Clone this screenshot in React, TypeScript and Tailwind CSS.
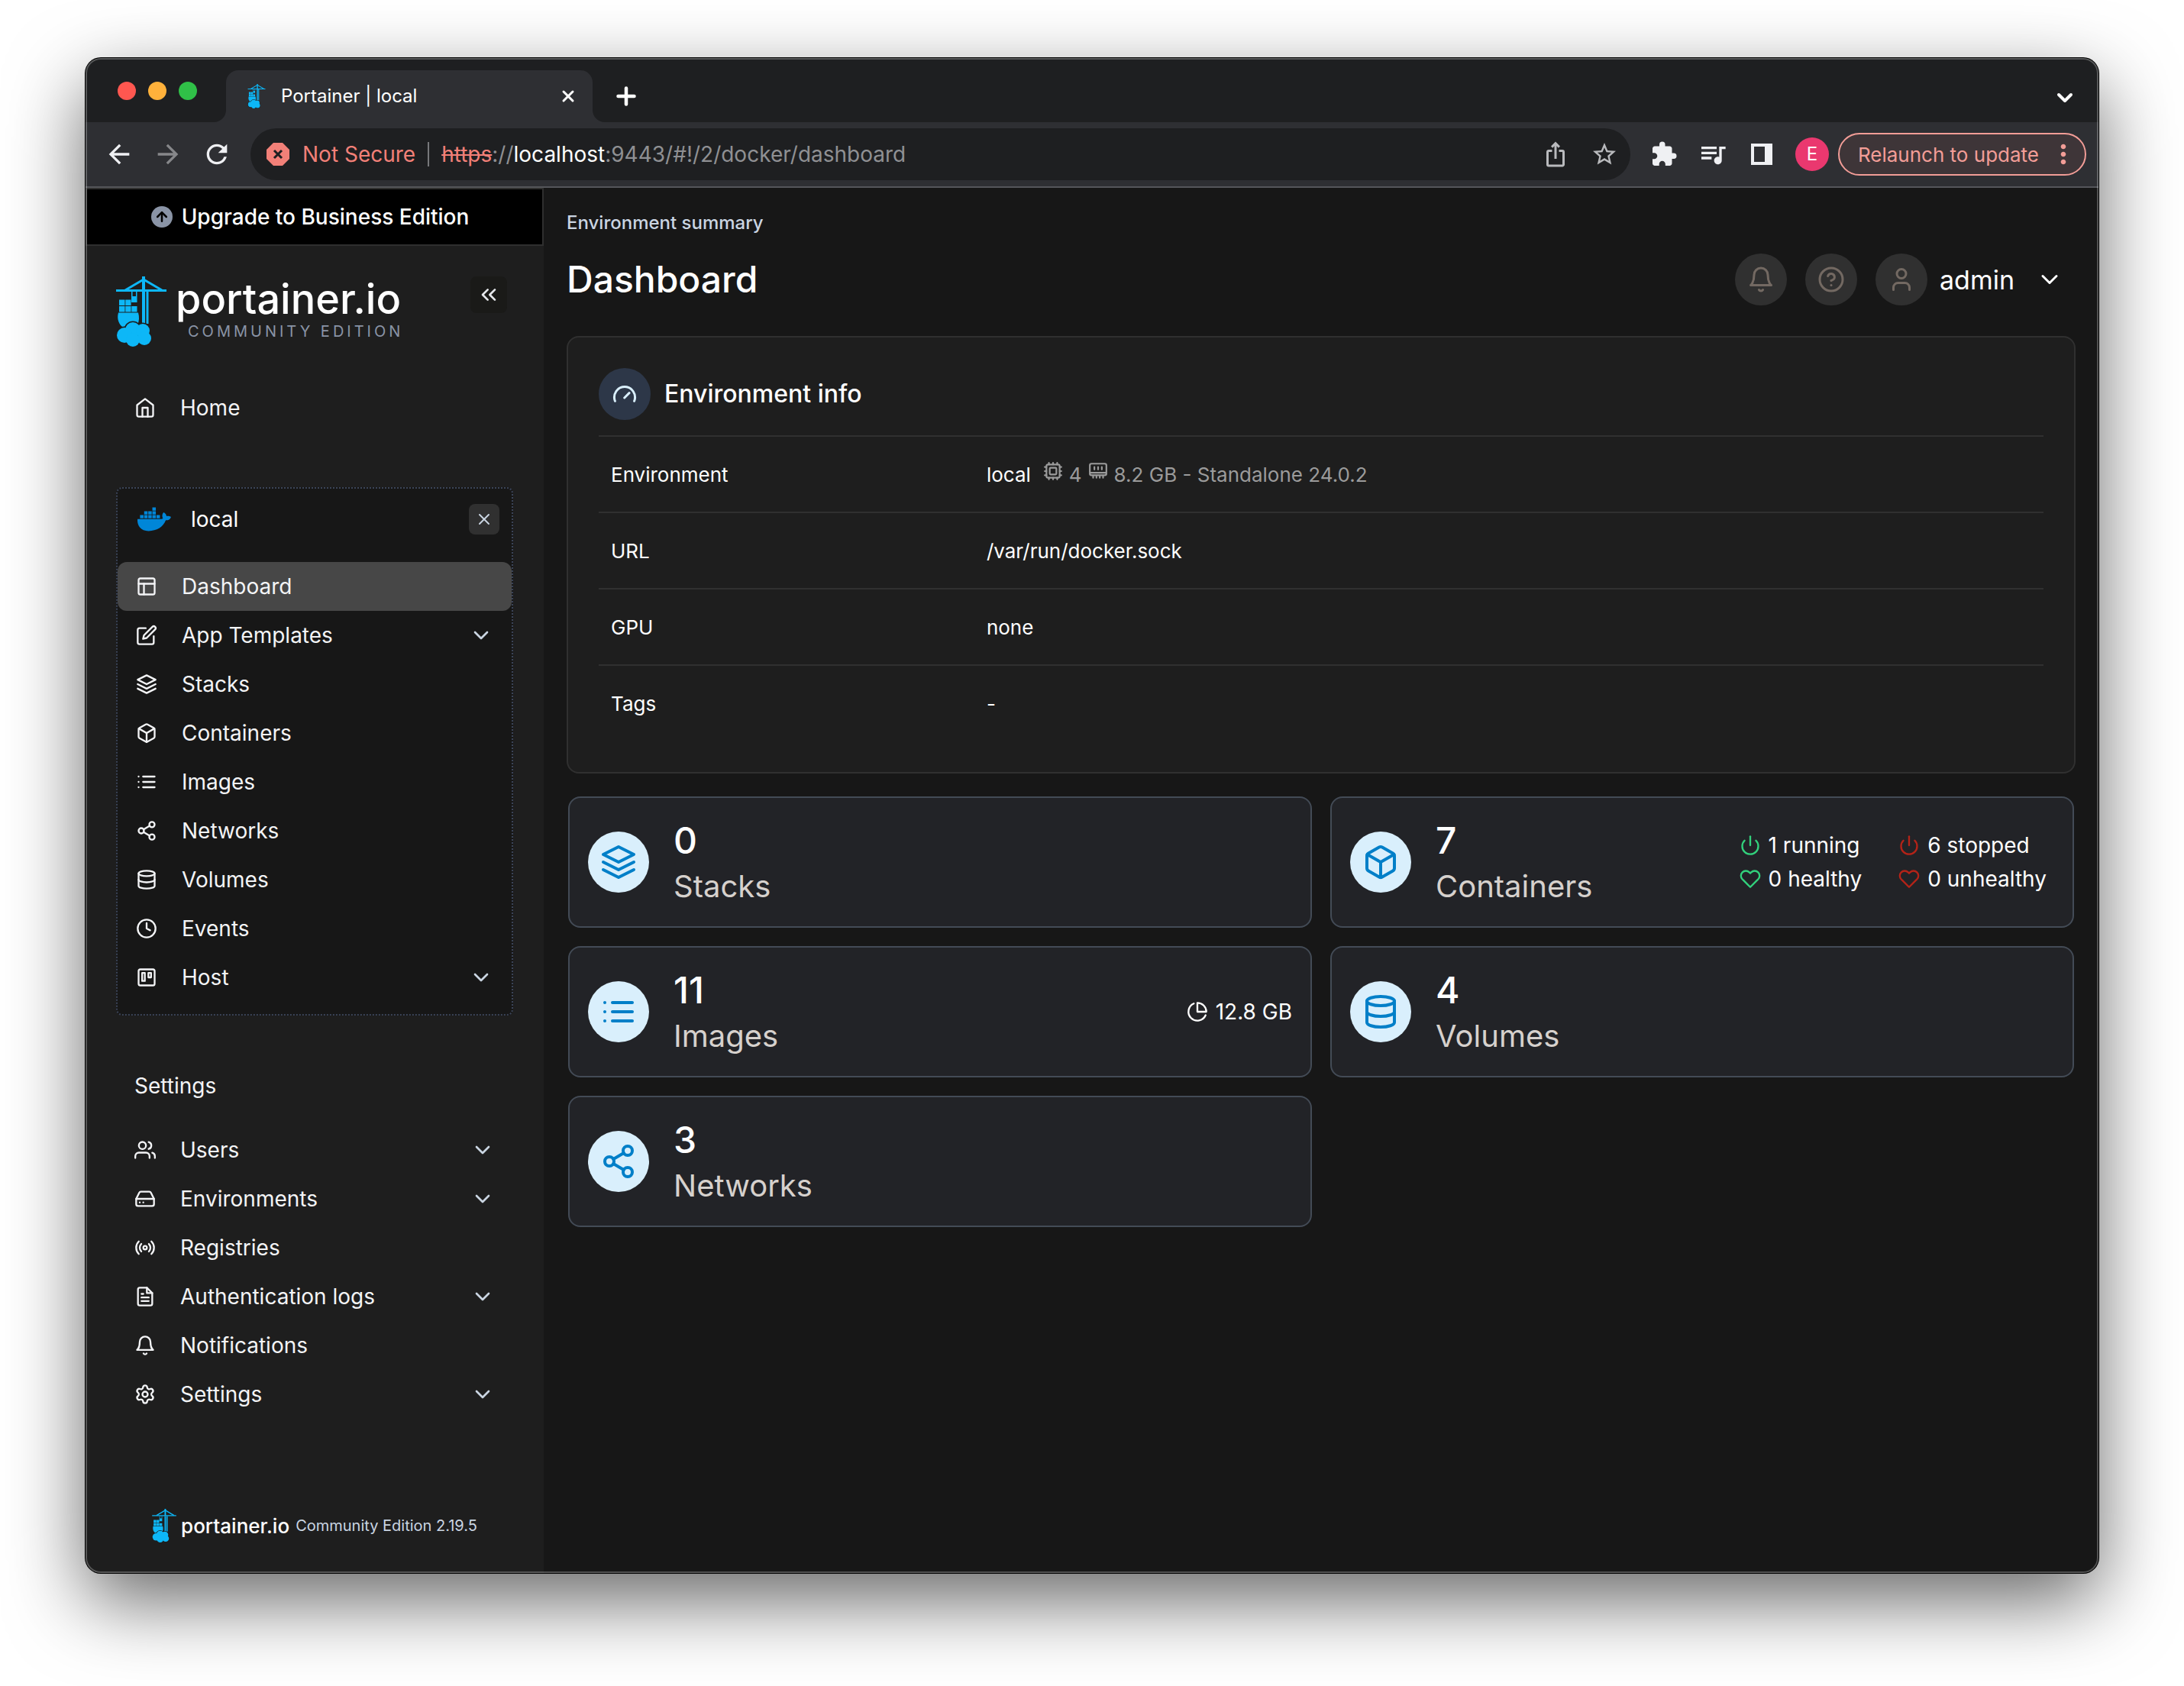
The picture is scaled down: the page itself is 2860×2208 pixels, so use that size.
import type { ReactNode } from "react";
import type { IconType } from "react-icons";
import {
  FiArrowUp,
  FiBell,
  FiBox,
  FiChevronDown,
  FiChevronsLeft,
  FiClock,
  FiDatabase,
  FiEdit,
  FiFileText,
  FiHardDrive,
  FiHeart,
  FiHelpCircle,
  FiHome,
  FiLayers,
  FiLayout,
  FiList,
  FiPieChart,
  FiPlus,
  FiPower,
  FiRadio,
  FiShare2,
  FiTrello,
  FiUsers,
  FiX,
} from "react-icons/fi";
import {
  MdArrowBack,
  MdArrowForward,
  MdExtension,
  MdMoreVert,
  MdOutlineIosShare,
  MdQueueMusic,
  MdRefresh,
  MdStarBorder,
} from "react-icons/md";
import { FaDocker } from "react-icons/fa";
import { Cpu, Settings, User } from "lucide-react";

type NavItem = {
  label: string;
  icon: ReactNode;
  expandable?: boolean;
  active?: boolean;
};

const envItems: NavItem[] = [
  { label: "Dashboard", icon: <FiLayout />, active: true },
  { label: "App Templates", icon: <FiEdit />, expandable: true },
  { label: "Stacks", icon: <FiLayers /> },
  { label: "Containers", icon: <FiBox /> },
  { label: "Images", icon: <FiList /> },
  { label: "Networks", icon: <FiShare2 /> },
  { label: "Volumes", icon: <FiDatabase /> },
  { label: "Events", icon: <FiClock /> },
  { label: "Host", icon: <FiTrello />, expandable: true },
];

const settingsItems: NavItem[] = [
  { label: "Users", icon: <FiUsers />, expandable: true },
  { label: "Environments", icon: <FiHardDrive />, expandable: true },
  { label: "Registries", icon: <FiRadio /> },
  { label: "Authentication logs", icon: <FiFileText />, expandable: true },
  { label: "Notifications", icon: <FiBell /> },
  { label: "Settings", icon: <Settings />, expandable: true },
];

const cloud = (
  <>
    <circle cx="22" cy="70" r="10" />
    <circle cx="35" cy="71" r="9" />
    <circle cx="11" cy="77" r="10" />
    <circle cx="37" cy="81" r="9" />
    <circle cx="22" cy="83" r="9" />
  </>
);

const CraneLogo = ({ className }: { className: string }) => (
  <svg viewBox="0 0 66 92" className={className} fill="#0db7f7">
    <path d="M34 0h4v18h-4zM0 17h66v3H0z" />
    <path d="M12 18 36 4l24 14" fill="none" stroke="#0db7f7" strokeWidth="3" />
    <path d="M34 20h4v42h-4zM39.500 20h3v42h-3z" />
    <path d="M20 20h1.500v6H26v-6h1.500v14H20z" />
    <path d="M4 30.500h7.500V38H4zM12.300 30.500h7.200V38h-7.200zM4 39h7.500v7.500H4zM12.300 39h7.200v7.500h-7.200zM20.300 39h7.200v7.500h-7.200z" />
    <path d="M3 47.500h26c1.500 5 1.500 11-1 16L10 67c-6-3-9.500-11-7-19.500z" />
    <g stroke="#1e1e1e" strokeWidth="3">
      {cloud}
    </g>
    {cloud}
  </svg>
);

const NavLink = ({ label, icon, expandable, active }: NavItem) => (
  <a
    href="#"
    className={
      active
        ? "flex h-16 items-center gap-8 rounded-xl bg-[#474747] px-6 text-[28px] text-gray-100"
        : "flex h-16 items-center gap-8 rounded-xl px-6 text-[28px] text-gray-100"
    }
  >
    <span className="[&>svg]:size-7">{icon}</span>
    <span className="flex-1">{label}</span>
    {expandable && <FiChevronDown className="size-8 text-slate-300" />}
  </a>
);

const TabStrip = () => (
  <div className="flex h-[84px] items-end bg-[#1e1f21] pr-7">
    <div className="flex h-[84px] w-[184px] items-center gap-4 pt-[2px] pl-[42px]">
      <button aria-label="Close window" className="size-6 rounded-full bg-[#ff5750]" />
      <button aria-label="Minimize window" className="size-6 rounded-full bg-[#ffb13b]" />
      <button aria-label="Zoom window" className="size-6 rounded-full bg-[#30c048]" />
    </div>
    <div className="relative flex h-[68px] w-[480px] items-center rounded-t-2xl bg-[#2e2f33] pr-5 pl-6">
      <svg viewBox="0 0 16 16" className="absolute bottom-0 -left-4 size-4" fill="#2e2f33">
        <path d="M16 0v16H0A16 16 0 0 0 16 0z" />
      </svg>
      <svg viewBox="0 0 16 16" className="absolute -right-4 bottom-0 size-4" fill="#2e2f33">
        <path d="M0 0v16h16A16 16 0 0 1 0 0z" />
      </svg>
      <CraneLogo className="h-8 w-8" />
      <span className="ml-4 flex-1 text-2xl text-white">Portainer | local</span>
      <button aria-label="Close tab" className="text-white">
        <FiX className="size-6" strokeWidth={3} />
      </button>
    </div>
    <button aria-label="New tab" className="mb-4 ml-6.5 text-white">
      <FiPlus className="size-9" strokeWidth={3} />
    </button>
    <button aria-label="Search tabs" className="mb-4 ml-auto text-white">
      <FiChevronDown className="size-8" strokeWidth={3} />
    </button>
  </div>
);

const Toolbar = () => (
  <div className="flex h-[86px] items-center border-b-2 border-[#55565a] bg-[#2e2f33] pr-4 pl-6 text-[#eff0f3]">
    <button aria-label="Back" className="mr-6">
      <MdArrowBack className="size-10" />
    </button>
    <button aria-label="Forward" className="mr-6 text-[#86878a]">
      <MdArrowForward className="size-10" />
    </button>
    <button aria-label="Reload" className="mr-6">
      <MdRefresh className="size-10" />
    </button>
    <div className="flex h-[68px] flex-1 items-center rounded-full bg-[#1e1f21] pr-4 pl-5 text-[28px]">
      <svg viewBox="0 0 32 32" className="size-8">
        <path d="M10 1h12l9 9v12l-9 9H10l-9-9V10z" fill="#f28078" />
        <path d="m11 11 10 10M21 11 11 21" stroke="#1e1f21" strokeWidth="3" />
      </svg>
      <span className="ml-4 text-[#f28078]">Not Secure</span>
      <span className="mx-4 h-8 w-[2px] bg-[#77787b]" />
      <span className="flex-1 text-[#8f9093]">
        <span className="text-[#f28078] line-through">https</span>://
        <span className="text-white">localhost</span>:9443/#!/2/docker/dashboard
      </span>
      <button aria-label="Share" className="mr-7 text-[#b9babd]">
        <MdOutlineIosShare className="size-9" />
      </button>
      <button aria-label="Bookmark" className="text-[#b9babd]">
        <MdStarBorder className="size-9" />
      </button>
    </div>
    <div className="ml-6 flex items-center gap-6">
      <button aria-label="Extensions">
        <MdExtension className="size-10 p-[2px]" />
      </button>
      <button aria-label="Media">
        <MdQueueMusic className="size-10" />
      </button>
      <button aria-label="Side panel">
        <svg viewBox="0 0 40 40" className="size-10">
          <path d="M6 6h28v28H6zM10 10v20h14V10z" fill="currentColor" fillRule="evenodd" />
        </svg>
      </button>
    </div>
    <button className="ml-6 size-11 rounded-full bg-[#ea386f] text-2xl text-white">E</button>
    <button className="ml-3 flex h-14 items-center rounded-full border-2 border-[#f29d97] bg-[#3e3538] pr-2 pl-6 text-[26px] text-[#f29d97]">
      Relaunch to update
      <MdMoreVert className="ml-3 size-10" />
    </button>
  </div>
);

const Sidebar = () => (
  <aside className="flex w-[600px] shrink-0 flex-col bg-[#1e1e1e]">
    <button className="flex h-[76px] items-center justify-center gap-3 border-2 border-[#2f2f2f] bg-black pr-3 text-[28px] font-medium text-white">
      <span className="flex size-7 items-center justify-center rounded-full bg-[#8a94a6] text-black">
        <FiArrowUp className="size-5" strokeWidth={3} />
      </span>
      Upgrade to Business Edition
    </button>

    <div className="flex items-start pt-10 pr-12 pl-10">
      <CraneLogo className="h-[92px] w-[66px]" />
      <div className="flex flex-1 flex-col pl-3">
        <span className="text-[54px] leading-[60px] font-medium text-white">portainer.io</span>
        <span className="pl-4 text-xl leading-6 tracking-[4px] text-[#8a94a6]">COMMUNITY EDITION</span>
      </div>
      <button aria-label="Collapse sidebar" className="flex size-12 items-center justify-center rounded-lg bg-[#1a1a18] text-gray-200">
        <FiChevronsLeft className="size-8" />
      </button>
    </div>

    <nav className="px-10 pt-12">
      <NavLink label="Home" icon={<FiHome />} />

      <div className="mt-[72px] rounded-lg border-2 border-dotted border-[#3b4458] bg-[#171717] pb-4">
        <div className="flex h-24 items-center pr-4 pb-4 pl-6.5">
          <FaDocker className="size-11 text-[#0086d8]" />
          <span className="ml-6.5 flex-1 text-[28px] text-white">local</span>
          <button aria-label="Close environment" className="flex size-10 items-center justify-center rounded-lg bg-[#303030] text-slate-300">
            <FiX className="size-6" />
          </button>
        </div>
        {envItems.map((item) => (
          <NavLink key={item.label} {...item} />
        ))}
      </div>

      <h2 className="mt-[72px] px-6 text-[28px] leading-10 text-gray-100">Settings</h2>
      <div className="mt-8">
        {settingsItems.map((item) => (
          <NavLink key={item.label} {...item} />
        ))}
      </div>
    </nav>

    <footer className="mt-auto flex items-center justify-center pb-10">
      <CraneLogo className="h-11 w-8" />
      <span className="ml-1.5 text-[26px] font-medium text-white">portainer.io</span>
      <span className="ml-2 text-xl text-slate-300">Community Edition 2.19.5</span>
    </footer>
  </aside>
);

const HeaderButton = ({ label, children }: { label: string; children: ReactNode }) => (
  <button aria-label={label} className="flex size-[68px] items-center justify-center rounded-full bg-[#303030] text-[#736962]">
    {children}
  </button>
);

const MemoryIcon = ({ className }: { className: string }) => (
  <svg
    viewBox="0 0 24 24"
    className={className}
    fill="none"
    stroke="currentColor"
    strokeWidth="2"
    strokeLinecap="round"
    strokeLinejoin="round"
  >
    <path d="M4 3h16a2 2 0 0 1 2 2v10a2 2 0 0 1-2 2H4a2 2 0 0 1-2-2V5a2 2 0 0 1 2-2zM2 14h20" />
    <path d="M7.500 7v3M12 7v3M16.500 7v3M6 18v2M10 18v2M14 18v2M18 18v2" />
  </svg>
);

const InfoRow = ({ label, children }: { label: string; children: ReactNode }) => (
  <tr className="h-[100px] border-t-2 border-[#303030]">
    <th scope="row" className="w-[26%] pl-4 text-left font-normal">
      {label}
    </th>
    <td className="pl-4">{children}</td>
  </tr>
);

type CardProps = {
  icon: IconType;
  count: number;
  label: string;
  children?: ReactNode;
};

const DashboardCard = ({ icon: Icon, count, label, children }: CardProps) => (
  <a href="#" className="flex h-[172px] items-center rounded-2xl border-2 border-[#434b56] bg-[#222327] px-6">
    <span className="flex size-20 items-center justify-center rounded-full bg-[#d9effc] text-[#007fc8]">
      <Icon className="size-12" />
    </span>
    <span className="flex flex-1 flex-col pt-1 pl-8">
      <span className="text-5xl leading-[60px] font-medium text-white">{count}</span>
      <span className="text-[40px] leading-[60px] text-[#d6d1cd]">{label}</span>
    </span>
    {children}
  </a>
);

const Status = ({ icon: Icon, color, text }: { icon: IconType; color: string; text: string }) => (
  <span className="flex items-center gap-2.5">
    <Icon className={color} />
    {text}
  </span>
);

const App = () => {
  return (
    <div className="flex min-h-screen flex-col bg-white px-28 pt-[76px] pb-[148px] font-[Inter,sans-serif]">
      <div className="relative flex flex-1 flex-col overflow-hidden rounded-[20px] bg-[#171717] shadow-[0_0_0_1px_#000,0_36px_100px_rgba(0,0,0,0.6)]">
        <TabStrip />
        <Toolbar />
        <div className="flex flex-1">
          <Sidebar />
          <main className="flex-1 px-[30px] pt-7">
            <p className="text-2xl leading-9 font-medium text-slate-300">Environment summary</p>
            <header className="flex items-center pt-[22px] pr-4">
              <h1 className="flex-1 text-5xl font-medium text-white">Dashboard</h1>
              <div className="flex items-center gap-6">
                <HeaderButton label="Notifications">
                  <FiBell className="size-9" />
                </HeaderButton>
                <HeaderButton label="Help">
                  <FiHelpCircle className="size-9" />
                </HeaderButton>
                <button className="flex items-center text-[34px] text-white">
                  <span className="flex size-[68px] items-center justify-center rounded-full bg-[#303030] text-[#736962]">
                    <User className="size-9" />
                  </span>
                  <span className="pr-7 pl-4">admin</span>
                  <FiChevronDown className="size-9" />
                </button>
              </div>
            </header>

            <section className="mt-10 rounded-2xl border-2 border-[#303030] bg-[#1e1e1e] p-10">
              <div className="flex items-center pb-5">
                <span className="flex size-[68px] items-center justify-center rounded-full bg-[#2d3748] text-[#d9effc]">
                  <svg viewBox="0 0 24 24" className="size-9" fill="none" stroke="currentColor" strokeWidth="2" strokeLinecap="round">
                    <path d="M3.600 18.200a9 9.200 0 1 1 16.800 0M11.800 15.300l4.200-4.200" />
                  </svg>
                </span>
                <h2 className="pl-4.5 text-[32px] font-medium text-white">Environment info</h2>
              </div>
              <table className="w-full text-[26px] text-white">
                <tbody>
                  <InfoRow label="Environment">
                    <span className="flex items-center gap-2">
                      <span className="mr-2">local</span>
                      <Cpu className="mb-2 size-[26px] text-[#9b9b9b]" />
                      <span className="text-[#9b9b9b]">4</span>
                      <MemoryIcon className="mb-2 size-[26px] text-[#9b9b9b]" />
                      <span className="text-[#9b9b9b]">8.2 GB - Standalone 24.0.2</span>
                    </span>
                  </InfoRow>
                  <InfoRow label="URL">/var/run/docker.sock</InfoRow>
                  <InfoRow label="GPU">none</InfoRow>
                  <InfoRow label="Tags">-</InfoRow>
                </tbody>
              </table>
            </section>

            <div className="mt-[30px] grid grid-cols-2 gap-6 px-[2px]">
              <DashboardCard icon={FiLayers} count={0} label="Stacks" />
              <DashboardCard icon={FiBox} count={7} label="Containers">
                <span className="grid grid-cols-[auto_auto] gap-x-12 pr-2.5 text-[28px] leading-[44px] text-white">
                  <Status icon={FiPower} color="text-[#32d17c]" text="1 running" />
                  <Status icon={FiPower} color="text-[#b42318]" text="6 stopped" />
                  <Status icon={FiHeart} color="text-[#32d17c]" text="0 healthy" />
                  <Status icon={FiHeart} color="text-[#b42318]" text="0 unhealthy" />
                </span>
              </DashboardCard>
              <DashboardCard icon={FiList} count={11} label="Images">
                <span className="text-[28px] text-white">
                  <Status icon={FiPieChart} color="text-white" text="12.8 GB" />
                </span>
              </DashboardCard>
              <DashboardCard icon={FiDatabase} count={4} label="Volumes" />
              <DashboardCard icon={FiShare2} count={3} label="Networks" />
            </div>
          </main>
        </div>
        {/* light rim along the inside of the window frame */}
        <div className="pointer-events-none absolute inset-0 rounded-[20px] border-2 border-white/25" />
      </div>
    </div>
  );
};

export default App;
